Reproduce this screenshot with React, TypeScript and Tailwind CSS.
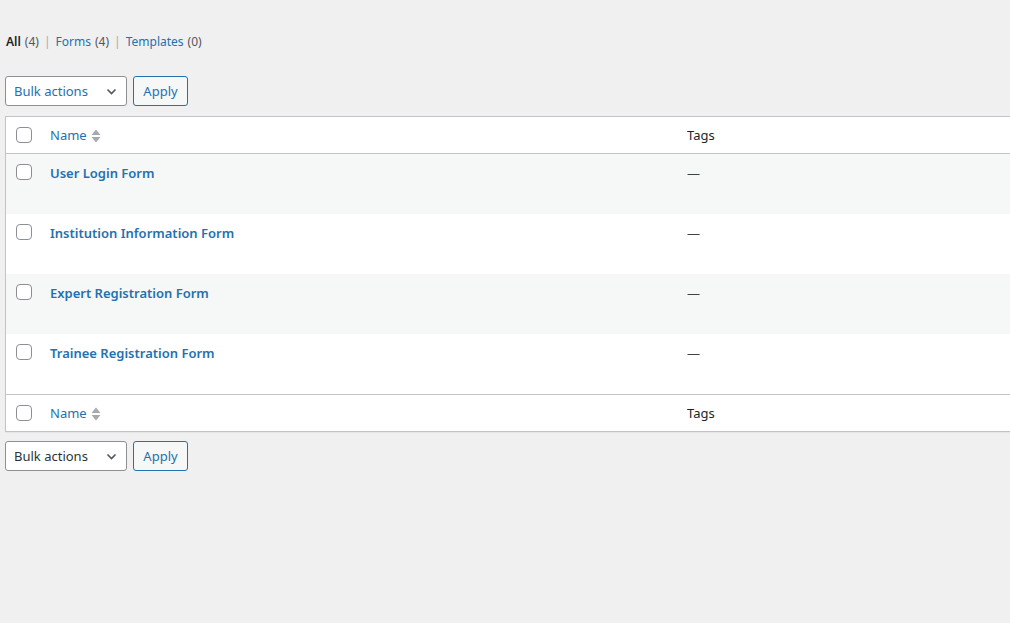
import React from "react";

const forms = [
  "User Login Form",
  "Institution Information Form",
  "Expert Registration Form",
  "Trainee Registration Form",
];

const Checkbox = () => (
  <span className="block w-4 h-4 rounded-[4px] border border-[#8c8f94] bg-white" />
);

const SortIcon = () => (
  <svg width="12" height="18" viewBox="0 0 12 18" className="ml-[3px]">
    <path d="M1.5 8 L6 2.5 L10.5 8 Z" fill="#a7aaad" />
    <path d="M1.5 10 L6 15.5 L10.5 10 Z" fill="#a7aaad" />
  </svg>
);

const BulkBar = ({ hover }: { hover?: boolean }) => (
  <div className="flex items-center gap-[6px]">
    <div
      className={`flex items-center justify-between w-[122px] h-[30px] border border-[#8c8f94] rounded-[3px] bg-white pl-[8px] pr-[9px] text-[13px] ${
        hover ? "text-[#2271b1]" : "text-[#2c3338]"
      }`}
    >
      <span className="pt-[2px]">Bulk actions</span>
      <svg width="11" height="11" viewBox="0 0 11 11">
        <path d="M1.5 3.5 L5.5 7.5 L9.5 3.5" fill="none" stroke="#50575e" strokeWidth="1.6" />
      </svg>
    </div>
    <div className="flex items-center justify-center w-[55px] h-[30px] pt-[2px] border border-[#2271b1] rounded-[3px] bg-[#f6f7f7] text-[13px] text-[#2271b1]">
      Apply
    </div>
  </div>
);

const HeadRow = ({ top }: { top?: boolean }) => (
  <div
    className={`grid grid-cols-[44px_637px_1fr] h-[37px] items-center ${
      top ? "border-b" : "border-t"
    } border-[#c3c4c7]`}
  >
    <div className="pl-[10px]">
      <Checkbox />
    </div>
    <div className="flex items-center pt-[2px] text-[13px] text-[#2271b1]">
      Name
      <SortIcon />
    </div>
    <div className="pt-[2px] text-[13px] text-[#1d2327]">Tags</div>
  </div>
);

export default function App() {
  return (
    <div
      className="min-h-[623px] w-[1010px] overflow-hidden bg-[#f0f0f1] text-[#3c434a] text-[13px]"
      style={{ fontFamily: '"Noto Sans", "Segoe UI", sans-serif' }}
    >
      <div className="h-[51px] pt-[33px] pl-[6px] flex items-start text-[12px] leading-[18px]">
        <span className="font-semibold text-[#1d2327]">All</span>
        <span className="ml-[4px] text-[#50575e]">(4)</span>
        <span className="mx-[5px] text-[#a7aaad]">|</span>
        <span className="text-[#2271b1]">Forms</span>
        <span className="ml-[4px] text-[#50575e]">(4)</span>
        <span className="mx-[5px] text-[#a7aaad]">|</span>
        <span className="text-[#2271b1]">Templates</span>
        <span className="ml-[4px] text-[#50575e]">(0)</span>
      </div>

      <div className="pl-[5px] mt-[25px]">
        <BulkBar hover />
      </div>

      <div className="ml-[5px] mt-[10px] w-[1030px] bg-white border border-[#c3c4c7] shadow-[0_1px_1px_rgba(0,0,0,0.04)]">
        <HeadRow top />
        {forms.map((name, i) => (
          <div
            key={name}
            className={`grid grid-cols-[44px_637px_1fr] h-[60px] pt-[10px] ${
              i % 2 === 0 ? "bg-[#f6f7f7]" : "bg-white"
            }`}
          >
            <div className="pl-[10px]">
              <Checkbox />
            </div>
            <div className="text-[13px] font-semibold text-[#2271b1] leading-[18px]">
              {name}
            </div>
            <div className="text-[13px] text-[#3c434a] leading-[18px]">—</div>
          </div>
        ))}
        <HeadRow />
      </div>

      <div className="pl-[5px] mt-[9px]">
        <BulkBar />
      </div>
    </div>
  );
}
